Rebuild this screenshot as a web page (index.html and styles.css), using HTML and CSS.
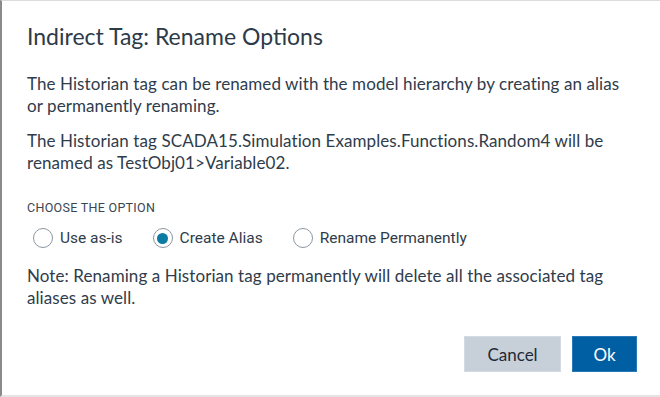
FILE: index.html
```html
<!DOCTYPE html>
<html>
<head>
<meta charset="utf-8">
<link rel="stylesheet" href="styles.css">
</head>
<body>
<div class="dialog">
  <h1 class="title">Indirect Tag: Rename Options</h1>
  <p class="text p1">The Historian tag can be renamed with the model hierarchy by creating an alias or permanently renaming.</p>
  <p class="text p2">The Historian tag SCADA15.Simulation Examples.Functions.Random4 will be renamed as TestObj01&gt;Variable02.</p>
  <div class="label">CHOOSE THE OPTION</div>
  <div class="radios">
    <label class="radio"><span class="circle"></span><span class="rlabel">Use as-is</span></label>
    <label class="radio"><span class="circle checked"></span><span class="rlabel">Create Alias</span></label>
    <label class="radio"><span class="circle"></span><span class="rlabel">Rename Permanently</span></label>
  </div>
  <p class="text note">Note: Renaming a Historian tag permanently will delete all the associated tag aliases as well.</p>
  <div class="actions">
    <button class="btn cancel">Cancel</button>
    <button class="btn ok">Ok</button>
  </div>
</div>
</body>
</html>
```
FILE: styles.css
```css
html, body {
  margin: 0;
  padding: 0;
  background: #fff;
}
.dialog {
  box-sizing: border-box;
  width: 660px;
  height: 397px;
  border-left: 2px solid #8a8a8a;
  border-top: 1px solid #dcdcdc;
  border-bottom: 2px solid #e4e4e4;
  padding: 20px 23px 0 25px;
  color: #2f3c4b;
  font-family: Lato, "Liberation Sans", sans-serif;
  display: flex;
  flex-direction: column;
}
.title {
  margin: 0;
  font-weight: 400;
  font-size: 23px;
  line-height: 30px;
  color: #2d3a48;
}
.text {
  margin: 0;
  font-size: 17px;
  line-height: 22px;
  letter-spacing: 0.08px;
  padding-right: 1px;
}
.p1 { margin-top: 22px; }
.p2 { margin-top: 13px; }
.label {
  margin-top: 26px;
  font-family: Roboto, sans-serif;
  font-size: 12.5px;
  letter-spacing: 0.3px;
  color: #3a4654;
  line-height: 16px;
}
.radios {
  display: flex;
  gap: 30px;
  margin-top: 12px;
  margin-left: 6px;
  height: 20px;
  align-items: center;
}
.radio {
  display: flex;
  align-items: center;
  gap: 7px;
}
.circle {
  box-sizing: border-box;
  width: 20px;
  height: 20px;
  border-radius: 50%;
  border: 1px solid #8b96a1;
  background: #fff;
  position: relative;
}
.circle.checked::after {
  content: "";
  position: absolute;
  left: 3.5px;
  top: 3.5px;
  width: 11px;
  height: 11px;
  border-radius: 50%;
  background: #0b7ba3;
}
.rlabel {
  font-family: Roboto, sans-serif;
  font-size: 15.5px;
  color: #2f3c4b;
}
.note { margin-top: 17px; }
.actions {
  display: flex;
  justify-content: flex-end;
  gap: 11px;
  margin-top: 27px;
}
.btn {
  font-family: Lato, sans-serif;
  font-size: 17px;
  height: 36px;
  border: 1px solid transparent;
  padding: 0;
}
.cancel {
  width: 97px;
  background: #c7cfd8;
  border-color: #d4dae1;
  color: #1e2a37;
}
.ok {
  width: 65px;
  background: #005fa3;
  border-color: #2b78b8;
  color: #fff;
}
```
